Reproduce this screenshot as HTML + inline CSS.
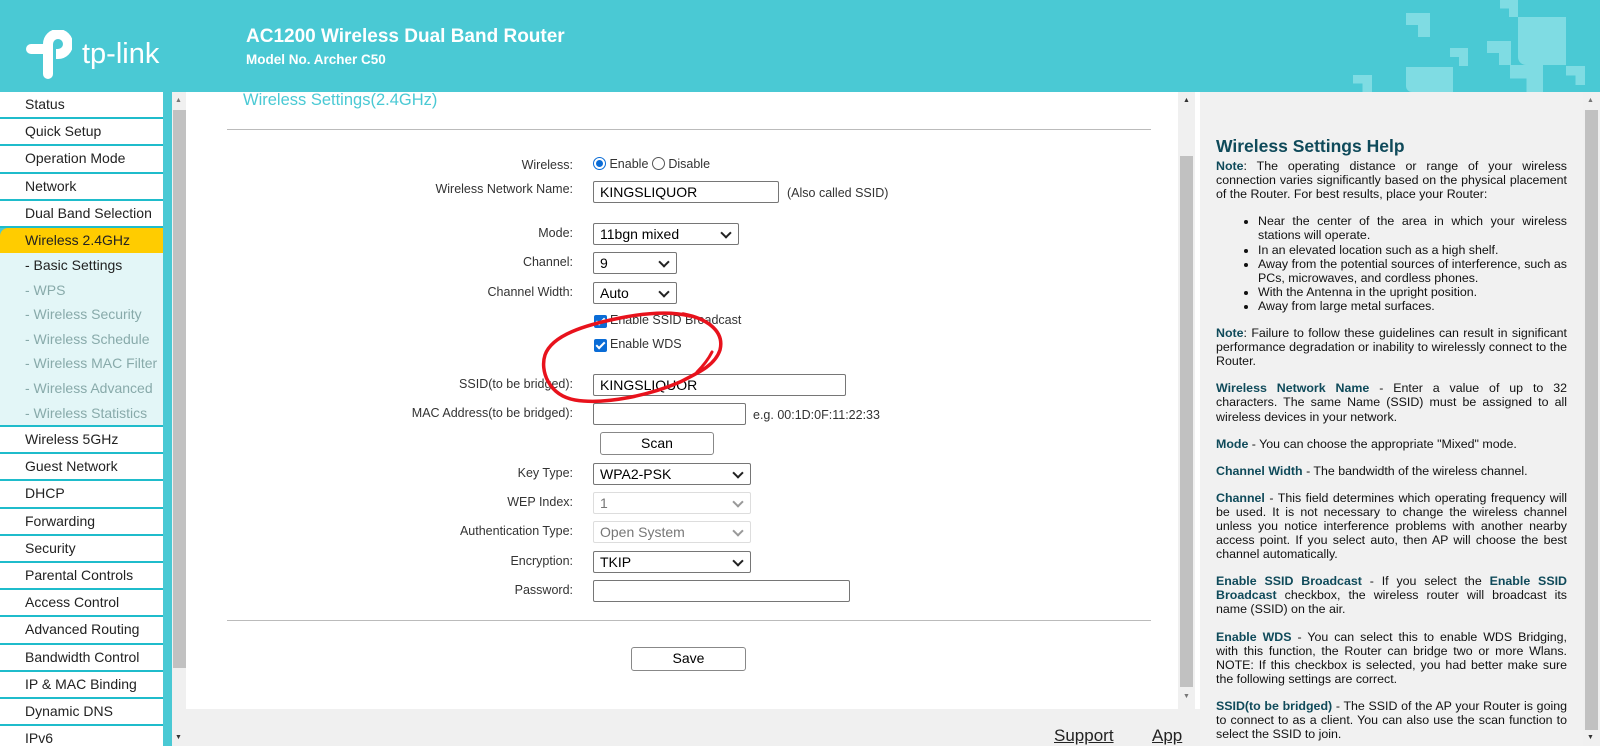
<!DOCTYPE html>
<html><head><meta charset="utf-8"><style>
*{box-sizing:border-box;margin:0;padding:0}
html{background:#f0f0f0;width:1600px;height:746px;overflow:hidden}
body{width:1600px;height:746px;overflow:hidden;font-family:"Liberation Sans",Arial,sans-serif;background:#f0f0f0;position:relative}
.hdr{position:absolute;left:0;top:0;width:1600px;height:92px;background:#4ac9d4;overflow:hidden}
.sq{position:absolute;background:#7fdce3;clip-path:polygon(0 0,100% 0,100% 100%,50% 100%,50% 50%,0 50%)}
.sf{position:absolute;background:#7fdce3;border-radius:0 0 0 6px}
.t1{position:absolute;left:246px;top:26px;color:#fff;font-weight:bold;font-size:19px}
.t2{position:absolute;left:246px;top:52px;color:#fff;font-weight:bold;font-size:13.5px}
.sidebg{position:absolute;left:0;top:92px;width:172px;height:654px;background:#4ac9d4}
.side{position:absolute;left:0;top:92px;width:163px;height:654px;overflow:hidden}
.mi{height:27.2px;background:#fff;border-bottom:2px solid #1fbccb;font-size:14px;color:#222;padding-left:25px;line-height:25px}
.mi.sel{background:#ffcc00;border-radius:8px 0 0 0;border-bottom:none;height:25px}
.mi.last{height:40px;border-bottom:none}
.sub{background:#e3f6f7;border-bottom:2px solid #1fbccb}
.sub div{height:24.6px;line-height:24px;font-size:14px;color:#8aa;padding-left:25px;white-space:nowrap;overflow:hidden}
.sb{position:absolute;background:#f0f0f0}
.th{position:absolute;background:#c1c1c1}
.main{position:absolute;left:186px;top:92px;width:992px;height:617px;background:#fff}
.lbl{position:absolute;font-size:12.5px;color:#333;text-align:right;right:1027px;white-space:nowrap}
.inp{position:absolute;border:1px solid #767676;background:#fff;font-size:14px;padding-left:6px;line-height:20px;height:22px;border-radius:2px;color:#000}
.sel2:after{content:"";position:absolute;right:8px;top:5px;width:6px;height:6px;border-right:2px solid #222;border-bottom:2px solid #222;transform:rotate(45deg)}
.dis{border-color:#ddd;color:#777}
.dis:after{border-color:#999!important}
.btn{position:absolute;border:1px solid #888;border-radius:3px;background:#fff;font-size:14px;text-align:center;line-height:20px}
.cb{position:absolute;width:13px;height:13px;background:#0a6cd6;border-radius:2px}
.cb:after{content:"";position:absolute;left:4px;top:1px;width:3px;height:7px;border-right:2px solid #fff;border-bottom:2px solid #fff;transform:rotate(45deg)}
.help{position:absolute;left:1200px;top:92px;width:383px;height:654px;background:#f1f1f1;padding:47px 16px 0 16px;font-size:12.4px;line-height:14.1px;color:#111;text-align:justify;overflow:hidden}
.help h2{font-size:17.5px;color:#0f4a5a;margin-bottom:6px}
.help b{color:#0f4a5a}
.help p{margin-bottom:13px}
.help ul{margin:0 0 13px 42px}
</style></head><body>
<div class="hdr">
<svg style="position:absolute;left:26px;top:30px" width="46" height="50" viewBox="0 0 46 50"><path d="M5 19 H22 V44" fill="none" stroke="#fff" stroke-width="10" stroke-linecap="round" stroke-linejoin="round"/><path d="M22 19 V14 A10 10 0 1 1 32 24 H30" fill="none" stroke="#fff" stroke-width="10"/></svg>
<div style="position:absolute;left:82px;top:38px;color:#fff;font-size:29px">tp-link</div>
<div class="t1">AC1200 Wireless Dual Band Router</div>
<div class="t2">Model No. Archer C50</div>
<div class="sq" style="left:1406px;top:13px;width:24px;height:24px"></div>
<div class="sq" style="left:1500px;top:0;width:18px;height:17px"></div>
<div class="sf" style="left:1518px;top:17px;width:48px;height:48px;border-radius:0 0 0 8px"></div>
<div class="sq" style="left:1450px;top:48px;width:18px;height:18px"></div>
<div class="sq" style="left:1487px;top:41px;width:24px;height:24px"></div>
<div class="sq" style="left:1510px;top:65px;width:33px;height:27px"></div>
<div class="sq" style="left:1566px;top:66px;width:19px;height:19px"></div>
<div class="sq" style="left:1353px;top:75px;width:19px;height:17px"></div>
<div class="sf" style="left:1406px;top:67px;width:47px;height:25px"></div>
</div>
<div class="sidebg"></div>
<div class="side">
<div class="mi">Status</div><div class="mi">Quick Setup</div><div class="mi">Operation Mode</div><div class="mi">Network</div><div class="mi">Dual Band Selection</div>
<div class="mi sel">Wireless 2.4GHz</div>
<div class="sub"><div style="color:#222">- Basic Settings</div><div>- WPS</div><div>- Wireless Security</div><div>- Wireless Schedule</div><div>- Wireless MAC Filter</div><div>- Wireless Advanced</div><div>- Wireless Statistics</div></div>
<div class="mi">Wireless 5GHz</div><div class="mi">Guest Network</div><div class="mi">DHCP</div><div class="mi">Forwarding</div><div class="mi">Security</div><div class="mi">Parental Controls</div><div class="mi">Access Control</div><div class="mi">Advanced Routing</div><div class="mi">Bandwidth Control</div><div class="mi">IP &amp; MAC Binding</div><div class="mi">Dynamic DNS</div><div class="mi last">IPv6</div>
</div>
<div class="sb" style="left:172px;top:92px;width:15px;height:654px"></div>
<div class="th" style="left:173px;top:110px;width:13px;height:558px"></div>
<div style="position:absolute;left:175px;top:97px;font-size:7px;color:#777">▲</div>
<div style="position:absolute;left:175px;top:734px;font-size:7px;color:#333">▼</div>
<div class="main">
<div style="position:absolute;left:57px;top:-1px;font-size:16.5px;color:#4ac9d4">Wireless Settings(2.4GHz)</div>
<div style="position:absolute;left:41px;top:37px;width:924px;height:1px;background:#bbb"></div>
<div style="position:absolute;left:41px;top:528px;width:924px;height:1px;background:#bbb"></div>
</div>
<div class="lbl" style="top:158px">Wireless:</div>
<div style="position:absolute;left:593px;top:157px;font-size:12.5px;color:#333"><span style="display:inline-block;width:13px;height:13px;border-radius:50%;border:1px solid #0a6cd6;vertical-align:-2px;position:relative"><span style="position:absolute;left:2px;top:2px;width:7px;height:7px;border-radius:50%;background:#0a6cd6"></span></span> Enable <span style="display:inline-block;width:13px;height:13px;border-radius:50%;border:1px solid #555;vertical-align:-2px"></span> Disable</div>
<div class="lbl" style="top:182px">Wireless Network Name:</div>
<div class="inp" style="left:593px;top:181px;width:186px">KINGSLIQUOR</div>
<div style="position:absolute;left:787px;top:186px;font-size:12.5px;color:#333">(Also called SSID)</div>
<div class="lbl" style="top:226px">Mode:</div>
<div class="inp sel2" style="left:593px;top:223px;width:146px">11bgn mixed</div>
<div class="lbl" style="top:255px">Channel:</div>
<div class="inp sel2" style="left:593px;top:252px;width:84px">9</div>
<div class="lbl" style="top:285px">Channel Width:</div>
<div class="inp sel2" style="left:593px;top:282px;width:84px">Auto</div>
<div class="cb" style="left:594px;top:315px"></div>
<div style="position:absolute;left:610px;top:313px;font-size:12.5px;color:#333">Enable SSID Broadcast</div>
<div class="cb" style="left:594px;top:339px"></div>
<div style="position:absolute;left:610px;top:337px;font-size:12.5px;color:#333">Enable WDS</div>
<div class="lbl" style="top:377px">SSID(to be bridged):</div>
<div class="inp" style="left:593px;top:374px;width:253px">KINGSLIQUOR</div>
<div class="lbl" style="top:406px">MAC Address(to be bridged):</div>
<div class="inp" style="left:593px;top:403px;width:153px"></div>
<div style="position:absolute;left:753px;top:408px;font-size:12.5px;color:#333">e.g. 00:1D:0F:11:22:33</div>
<div class="btn" style="left:600px;top:432px;width:114px;height:23px">Scan</div>
<div class="lbl" style="top:466px">Key Type:</div>
<div class="inp sel2" style="left:593px;top:463px;width:158px">WPA2-PSK</div>
<div class="lbl" style="top:495px">WEP Index:</div>
<div class="inp sel2 dis" style="left:593px;top:492px;width:158px">1</div>
<div class="lbl" style="top:524px">Authentication Type:</div>
<div class="inp sel2 dis" style="left:593px;top:521px;width:158px">Open System</div>
<div class="lbl" style="top:554px">Encryption:</div>
<div class="inp sel2" style="left:593px;top:551px;width:158px">TKIP</div>
<div class="lbl" style="top:583px">Password:</div>
<div class="inp" style="left:593px;top:580px;width:257px"></div>
<div class="btn" style="left:631px;top:647px;width:115px;height:24px">Save</div>
<svg style="position:absolute;left:0;top:0" width="1600" height="746"><path d="M683 314 C705 318 725 330 720 350 C715 365 700 372 680 382 C650 395 605 405 575 400 C548 395 540 370 545 355 C552 335 585 325 620 318 C645 313 670 311 690 316" fill="none" stroke="#e8121c" stroke-width="3.5" stroke-linecap="round"/><path d="M697 372 C703 366 708 360 712 352" fill="none" stroke="#e8121c" stroke-width="3" stroke-linecap="round"/></svg>
<div style="position:absolute;left:186px;top:709px;width:1014px;height:37px;background:#f0f0f0"></div>
<div style="position:absolute;left:1054px;top:726px;font-size:17px;line-height:20px;color:#222;text-decoration:underline">Support</div>
<div style="position:absolute;left:1152px;top:726px;font-size:17px;line-height:20px;color:#222;text-decoration:underline">App</div>
<div class="sb" style="left:1178px;top:92px;width:17px;height:617px"></div>
<div class="th" style="left:1180px;top:156px;width:13px;height:531px"></div>
<div style="position:absolute;left:1183px;top:97px;font-size:7px;color:#333">▲</div>
<div style="position:absolute;left:1183px;top:693px;font-size:7px;color:#777">▼</div>
<div style="position:absolute;left:1195px;top:92px;width:5px;height:617px;background:#fff"></div>
<div class="help">
<h2>Wireless Settings Help</h2>
<p><b>Note</b>: The operating distance or range of your wireless connection varies significantly based on the physical placement of the Router. For best results, place your Router:</p>
<ul><li>Near the center of the area in which your wireless stations will operate.</li><li>In an elevated location such as a high shelf.</li><li>Away from the potential sources of interference, such as PCs, microwaves, and cordless phones.</li><li>With the Antenna in the upright position.</li><li>Away from large metal surfaces.</li></ul>
<p><b>Note</b>: Failure to follow these guidelines can result in significant performance degradation or inability to wirelessly connect to the Router.</p>
<p><b>Wireless Network Name</b> - Enter a value of up to 32 characters. The same Name (SSID) must be assigned to all wireless devices in your network.</p>
<p><b>Mode</b> - You can choose the appropriate "Mixed" mode.</p>
<p><b>Channel Width</b> - The bandwidth of the wireless channel.</p>
<p><b>Channel</b> - This field determines which operating frequency will be used. It is not necessary to change the wireless channel unless you notice interference problems with another nearby access point. If you select auto, then AP will choose the best channel automatically.</p>
<p><b>Enable SSID Broadcast</b> - If you select the <b>Enable SSID Broadcast</b> checkbox, the wireless router will broadcast its name (SSID) on the air.</p>
<p><b>Enable WDS</b> - You can select this to enable WDS Bridging, with this function, the Router can bridge two or more Wlans. NOTE: If this checkbox is selected, you had better make sure the following settings are correct.</p>
<p><b>SSID(to be bridged)</b> - The SSID of the AP your Router is going to connect to as a client. You can also use the scan function to select the SSID to join.</p>
</div>
<div class="sb" style="left:1583px;top:92px;width:17px;height:654px"></div>
<div class="th" style="left:1585px;top:110px;width:13px;height:620px"></div>
<div style="position:absolute;left:1587px;top:97px;font-size:7px;color:#777">▲</div>
<div style="position:absolute;left:1587px;top:734px;font-size:7px;color:#333">▼</div>
</body></html>
